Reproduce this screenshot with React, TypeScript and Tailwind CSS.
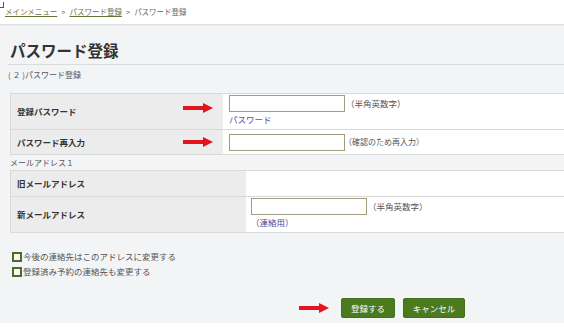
import React from "react";

const Arrow = ({ className = "" }: { className?: string }) => (
  <svg width="30" height="10" viewBox="0 0 30 10" className={className}>
    <rect x="0" y="3" width="21" height="4" fill="#e3141b" />
    <polygon points="20,0 30,5 20,10" fill="#e3141b" />
  </svg>
);

const Input = () => (
  <div className="w-[116px] h-[17px] bg-white border border-[#a39d80]" />
);

const CheckRow = ({ label }: { label: string }) => (
  <div className="flex items-center h-[15px] pl-[12px]">
    <span className="w-[10px] h-[10px] border-2 border-[#4d6b26] bg-[#f4f6ef] mr-[1px]" />
    <span className="text-[8.5px] text-[#555]">{label}</span>
  </div>
);

export default function App() {
  return (
    <div
      className="relative w-[564px] h-[333px] overflow-hidden bg-[#f3f4f6] text-[#333]"
      style={{ fontFamily: '"Noto Sans CJK JP", "Noto Sans", sans-serif' }}
    >
      {/* tiny corner mark */}
      <div className="absolute left-0 top-[2px] w-[4px] h-[6px] border-r border-b border-[#555]" />

      {/* breadcrumb */}
      <div className="h-[25px] bg-white border-b border-[#e2e2e2] shadow-[0_1px_1px_rgba(0,0,0,0.04)] flex items-center pl-[5px] text-[7.5px] text-[#666]">
        <span className="underline text-[#66763f]">メインメニュー</span>
        <span className="mx-[4px]">&gt;</span>
        <span className="underline text-[#66763f]">パスワード登録</span>
        <span className="mx-[4px]">&gt;</span>
        <span>パスワード登録</span>
      </div>

      <div className="pl-[8px]">
        <h1 className="mt-[15px] h-[20px] leading-[20px] pl-[2px] text-[15.5px] font-bold text-[#333]">
          パスワード登録
        </h1>
        <div className="mt-[4px] border-b border-[#dcdcdc]" />
        <p className="mt-[4px] h-[12px] leading-[12px] text-[8px] text-[#555]">
          ( ２ )パスワード登録
        </p>

        {/* table 1 */}
        <div className="mt-[12px] ml-[2px] border-t border-b border-l border-[#d9d9d9]">
          <div className="flex h-[36px] border-b border-[#d9d9d9]">
            <div className="w-[212px] bg-[#ececec] flex items-center justify-between pl-[6px] pr-[10px]">
              <span className="text-[8.5px] font-bold">登録パスワード</span>
              <Arrow className="mb-[8px]" />
            </div>
            <div className="flex-1 bg-white pl-[6px] pt-[1px]">
              <div className="flex items-center">
                <Input />
                <span className="ml-[1px] text-[8.5px] text-[#555]">（半角英数字）</span>
              </div>
              <div className="mt-[1px] text-[8.5px] text-[#5656a8] leading-[12px]">パスワード</div>
            </div>
          </div>
          <div className="flex h-[24px]">
            <div className="w-[212px] bg-[#ececec] flex items-center justify-between pl-[6px] pr-[10px]">
              <span className="text-[8.5px] font-bold">パスワード再入力</span>
              <Arrow />
            </div>
            <div className="flex-1 bg-white pl-[6px] flex items-center">
              <Input />
              <span className="ml-[-1px] text-[8px] text-[#555]">（確認のため再入力）</span>
            </div>
          </div>
        </div>

        <p className="h-[15px] leading-[15px] pl-[2px] text-[8px] text-[#555]">メールアドレス１</p>

        {/* table 2 */}
        <div className="ml-[2px] border-t border-b border-l border-[#d9d9d9]">
          <div className="flex h-[26px] border-b border-[#d9d9d9]">
            <div className="w-[235px] bg-[#ececec] flex items-center pl-[6px]">
              <span className="text-[8.5px] font-bold">旧メールアドレス</span>
            </div>
            <div className="flex-1 bg-white" />
          </div>
          <div className="flex h-[35px]">
            <div className="w-[235px] bg-[#ececec] flex items-center pl-[6px]">
              <span className="text-[8.5px] font-bold">新メールアドレス</span>
            </div>
            <div className="flex-1 bg-white pl-[5px] pt-[1px]">
              <div className="flex items-center">
                <Input />
                <span className="ml-[1px] text-[8.5px] text-[#555]">（半角英数字）</span>
              </div>
              <div className="mt-[1px] text-[8.5px] text-[#4848a0] leading-[12px]">（連絡用）</div>
            </div>
          </div>
        </div>
      </div>

      <div className="mt-[16px]">
        <CheckRow label="今後の連絡先はこのアドレスに変更する" />
        <CheckRow label="登録済み予約の連絡先も変更する" />
      </div>

      <div className="mt-[19px] flex items-center pl-[299px]">
        <Arrow />
        <button className="ml-[12px] w-[54px] h-[20px] bg-[#4b7a1f] border border-[#42701a] rounded-[2px] text-white text-[8.5px]">
          登録する
        </button>
        <button className="ml-[8px] w-[62px] h-[20px] bg-[#4b7a1f] border border-[#42701a] rounded-[2px] text-white text-[8.5px]">
          キャンセル
        </button>
      </div>

      <div className="absolute left-0 right-0 bottom-0 h-[10px] bg-white" />
    </div>
  );
}
